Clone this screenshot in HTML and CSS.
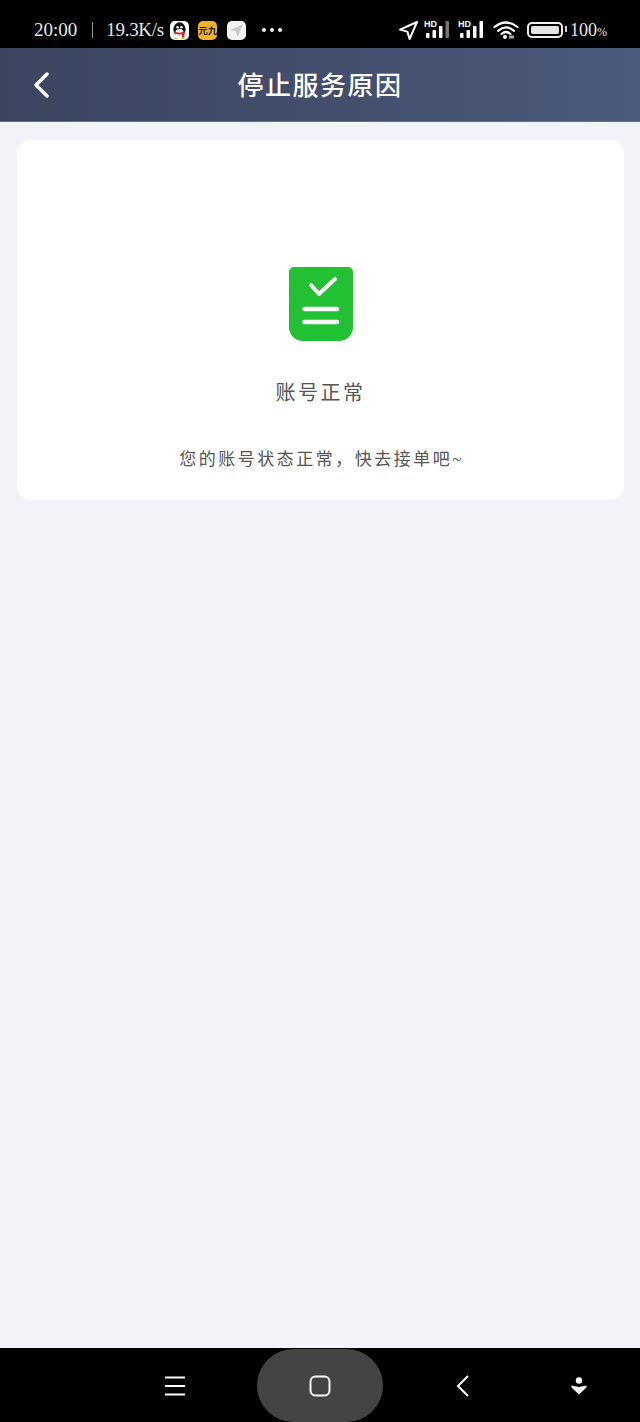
FILE: index.html
```html
<!DOCTYPE html>
<html lang="zh-CN">
<head>
    <meta charset="UTF-8">
    <title>停止服务原因</title>
    <meta name="viewport" content="width=device-width, initial-scale=1">
    <link rel="stylesheet" href="styles.css">
</head>
<body>
<div class="status">
    <span class="time">20:00</span>
    <i class="sep"></i>
    <span class="speed">19.3K/s</span>
    <div class="apps">
        <span class="app app-qq">
            <svg width="19" height="19" viewBox="1.500 1 15 15.500">
                <ellipse cx="9" cy="8" rx="5" ry="6" fill="#111"/>
                <ellipse cx="9" cy="11" rx="3.600" ry="3.600" fill="#fff"/>
                <circle cx="7.400" cy="6" r="1" fill="#fff"/>
                <circle cx="10.600" cy="6" r="1" fill="#fff"/>
                <path d="M4.600 9.400Q9 11.600 13.400 9.400L13.600 11Q9 13 4.400 11Z" fill="#c8262b"/>
                <path d="M11 11.500h2v3h-2z" fill="#c8262b"/>
                <path d="M4.500 15.400Q6.500 14 8 15.800H4.500ZM13.500 15.400Q11.500 14 10 15.800H13.500Z" fill="#e9a21f"/>
            </svg>
        </span>
        <span class="app app-yellow">元九</span>
        <span class="app app-send">
            <svg width="19" height="19" viewBox="0 0 18 18">
                <path d="M15 3L3 8.600 8.400 9.600 10 15.400Z" fill="#c9c9c9"/>
            </svg>
        </span>
    </div>
    <div class="dots"><i></i><i></i><i></i></div>
    <div class="indicators">
        <svg class="loc" width="21" height="21" viewBox="0 0 21 21">
            <path d="M19 2L2 9.600 9.400 11.600 11.600 19Z" fill="none" stroke="#fff" stroke-width="2" stroke-linejoin="round"/>
        </svg>
        <svg class="sig" width="27" height="20" viewBox="0 0 27 20">
            <text x="0" y="7" class="hd">HD</text>
            <rect x="2" y="13" width="3.500" height="5" rx=".8" fill="#fff"/>
            <rect x="8.500" y="10" width="3.500" height="8" rx=".8" fill="#fff"/>
            <rect x="15" y="6" width="3.500" height="12" rx=".8" fill="#fff"/>
            <rect x="21.500" y="1" width="3.500" height="17" rx=".8" fill="#777"/>
        </svg>
        <svg class="sig sig2" width="27" height="20" viewBox="0 0 27 20">
            <text x="0" y="7" class="hd">HD</text>
            <rect x="2" y="13" width="3.500" height="5" rx=".8" fill="#fff"/>
            <rect x="8.500" y="10" width="3.500" height="8" rx=".8" fill="#fff"/>
            <rect x="15" y="6" width="3.500" height="12" rx=".8" fill="#fff"/>
            <rect x="21.500" y="1" width="3.500" height="17" rx=".8" fill="#fff"/>
        </svg>
        <svg class="wifi" width="26" height="20" viewBox="0 0 26 20">
            <path d="M1.500 7Q13-2 24.500 7M5 10.800Q13 4 21 10.800M8.500 14Q13 10 17.500 14" fill="none" stroke="#fff" stroke-width="2.200" stroke-linecap="round"/>
            <circle cx="12" cy="17" r="2" fill="#fff"/>
            <path d="M16 18.500h5v-3h-5z" fill="#aaa"/>
        </svg>
        <div class="battery"><i></i></div>
        <span class="pct">100<small>%</small></span>
    </div>
</div>

<div class="head">
    <svg class="back" width="18" height="26" viewBox="0 0 18 26">
        <path d="M15 2L4 13 15 24" fill="none" stroke="#fff" stroke-width="3.400" stroke-linecap="round" stroke-linejoin="round"/>
    </svg>
    <h1>停止服务原因</h1>
</div>

<div class="main">
    <div class="card">
        <svg class="doc" width="64" height="74" viewBox="0 0 64 74">
            <path d="M5 0H59A5 5 0 0 1 64 5V60A14 14 0 0 1 50 74H14A14 14 0 0 1 0 60V5A5 5 0 0 1 5 0Z" fill="#22c033"/>
            <path d="M22 18L30 27 46 12" fill="none" stroke="#fff" stroke-width="4" stroke-linecap="round" stroke-linejoin="round"/>
            <path d="M15.500 42H48M15.500 55H48" stroke="#fff" stroke-width="4.500" stroke-linecap="round"/>
        </svg>
        <div class="state">账号正常</div>
        <div class="tip">您的账号状态正常，快去接单吧~</div>
    </div>
</div>

<div class="nav">
    <svg class="nav-menu" width="22" height="20" viewBox="0 0 22 20">
        <path d="M1 1.500H21M1 10H21M1 18.500H21" stroke="#fff" stroke-width="2"/>
    </svg>
    <div class="pill">
        <svg width="22" height="22" viewBox="0 0 22 22">
            <rect x="1.500" y="1.500" width="19" height="19" rx="5" fill="none" stroke="#fff" stroke-width="2"/>
        </svg>
    </div>
    <svg class="nav-back" width="14" height="22" viewBox="0 0 14 22">
        <path d="M12 1L2 11 12 21" fill="none" stroke="#fff" stroke-width="2"/>
    </svg>
    <svg class="nav-down" width="16" height="18" viewBox="0 0 16 18">
        <circle cx="8" cy="3.500" r="3.200" fill="#fff"/>
        <path d="M0.500 8.500L8 10 15.500 8.500 15.500 10.500 8 17.500 0.500 10.500Z" fill="#fff"/>
    </svg>
</div>
</body>
</html>
```

FILE: styles.css
```css
html, body{
    margin: 0;
    height: 100%;
}
body{
    display: flex;
    flex-direction: column;
    background-color: #f1f3f8;
    font-family: "Liberation Serif", "Noto Sans CJK SC", serif;
}
.status{
    display: flex;
    align-items: center;
    height: 48px;
    padding: 12px 33px 0 34px;
    box-sizing: border-box;
    background-color: #000;
    color: #e6e6e6;
    font-size: 19px;
}
.sep{
    width: 1px;
    height: 16px;
    margin: 0 13px 0 15px;
    background-color: #999;
}
.speed{
    letter-spacing: -.3px;
}
.apps{
    display: flex;
    gap: 9.500px;
    margin-left: 6px;
}
.app{
    display: flex;
    align-items: center;
    justify-content: center;
    width: 19px;
    height: 19px;
    border-radius: 5px;
    background-color: #fff;
    overflow: hidden;
}
.app-yellow{
    background-color: #efb02e;
    color: #222;
    font-size: 9.500px;
    font-weight: 700;
    font-family: "Noto Sans CJK SC", sans-serif;
    white-space: nowrap;
}
.app-send{
    background-color: #f2f2f2;
}
.dots{
    display: flex;
    gap: 4px;
    margin-left: 16px;
}
.dots i{
    width: 4px;
    height: 4px;
    border-radius: 50%;
    background-color: #eee;
}
.indicators{
    display: flex;
    align-items: center;
    margin-left: auto;
}
.hd{
    font: bold 9px "Liberation Sans", sans-serif;
    fill: #fff;
}
.sig{
    margin-left: 5px;
}
.sig2{
    margin-left: 7px;
}
.wifi{
    margin-left: 8px;
}
.battery{
    position: relative;
    width: 28px;
    height: 8px;
    margin: 0 7px 0 8px;
    padding: 2px;
    border: 2px solid #eee;
    border-radius: 5px;
}
.battery i{
    display: block;
    height: 100%;
    border-radius: 2px;
    background-color: #e4e4e4;
}
.battery::after{
    content: "";
    position: absolute;
    right: -6px;
    top: 2px;
    width: 2px;
    height: 6px;
    background-color: #ccc;
}
.pct{
    font-size: 18px;
}
.pct small{
    font-size: 12px;
}
.head{
    position: relative;
    display: flex;
    align-items: center;
    justify-content: center;
    height: 74px;
    padding-bottom: 2px;
    background: linear-gradient(90deg, #3b4560 0%, #434e6c 50%, #4c5a7c 100%);
    border-bottom: 1px solid #6a6e78;
    box-sizing: border-box;
}
.head h1{
    margin: 0;
    color: #fff;
    font-size: 26px;
    font-weight: 500;
    letter-spacing: 1.500px;
}
.back{
    position: absolute;
    left: 32px;
    top: 24px;
}
.main{
    flex: 1;
    padding: 18px 16px 0 17px;
}
.card{
    display: flex;
    flex-direction: column;
    align-items: center;
    height: 360px;
    padding-top: 127px;
    box-sizing: border-box;
    border-radius: 14px;
    background-color: #fff;
}
.doc{
    display: block;
}
.state{
    margin-top: 37px;
    color: #555;
    font-size: 20px;
    line-height: 30px;
    letter-spacing: 2.500px;
}
.tip{
    margin: 39px 0 0 2px;
    color: #555;
    font-size: 17px;
    line-height: 26px;
    letter-spacing: 2.500px;
}
.nav{
    display: flex;
    align-items: center;
    height: 74px;
    padding-left: 164px;
    box-sizing: border-box;
    border-top: 1px solid #000;
    background-color: #000;
}
.pill{
    display: flex;
    align-items: center;
    justify-content: center;
    width: 126px;
    height: 73px;
    margin-left: 71px;
    border-radius: 40px;
    background-color: #444;
}
.nav-back{
    margin-left: 73px;
}
.nav-down{
    margin-left: 101px;
}
```
